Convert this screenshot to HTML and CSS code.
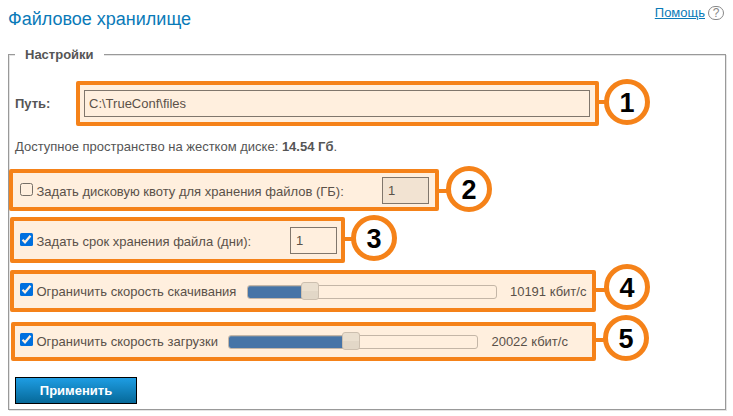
FILE: index.html
```html
<!DOCTYPE html>
<html lang="ru">
<head>
<meta charset="utf-8">
<title>Файловое хранилище</title>
<link rel="stylesheet" href="styles.css">
</head>
<body>
<header class="header">
  <h1 class="title">Файловое хранилище</h1>
  <div class="help"><a class="help-link" href="#">Помощь</a>
    <span class="help-icon">?</span>
  </div>
</header>
<fieldset class="settings">
  <legend class="legend">Настройки</legend>

  <div class="path-row">
    <label class="path-label" for="path">Путь:</label>
    <div class="mark mark-path">
      <input class="field field-path" id="path" type="text" value="C:\TrueConf\files">
      <span class="badge">1</span>
    </div>
  </div>

  <p class="space">Доступное пространство на жестком диске: <b>14.54 Гб</b>.</p>

  <div class="mark mark-quota">
    <svg class="check" width="13" height="13" viewBox="0 0 13 13"><rect x=".5" y=".5" width="12" height="12" rx="2" fill="none" stroke="#756e66"/></svg>
    <span class="label">Задать дисковую квоту для хранения файлов (ГБ):</span>
    <input class="field field-small field-disabled" type="text" value="1" disabled>
    <span class="badge">2</span>
  </div>

  <div class="mark mark-days">
    <svg class="check" width="13" height="13" viewBox="0 0 13 13"><rect width="13" height="13" rx="1.5" fill="#0070df"/><path d="M2.5 6.8 5 9.3 10.5 2.8" fill="none" stroke="#fff0df" stroke-width="2.2"/></svg>
    <span class="label">Задать срок хранения файла (дни):</span>
    <input class="field field-small" type="text" value="1">
    <span class="badge">3</span>
  </div>

  <div class="mark mark-download">
    <svg class="check" width="13" height="13" viewBox="0 0 13 13"><rect width="13" height="13" rx="1.5" fill="#0070df"/><path d="M2.5 6.8 5 9.3 10.5 2.8" fill="none" stroke="#fff0df" stroke-width="2.2"/></svg>
    <span class="label">Ограничить скорость скачивания</span>
    <div class="slider"><div class="slider-fill" style="width: 62px"></div><div class="slider-handle" style="left: 53px"></div></div>
    <span class="value">10191 кбит/с</span>
    <span class="badge">4</span>
  </div>

  <div class="mark mark-upload">
    <svg class="check" width="13" height="13" viewBox="0 0 13 13"><rect width="13" height="13" rx="1.5" fill="#0070df"/><path d="M2.5 6.8 5 9.3 10.5 2.8" fill="none" stroke="#fff0df" stroke-width="2.2"/></svg>
    <span class="label">Ограничить скорость загрузки</span>
    <div class="slider"><div class="slider-fill" style="width: 122px"></div><div class="slider-handle" style="left: 113px"></div></div>
    <span class="value">20022 кбит/с</span>
    <span class="badge">5</span>
  </div>

  <button class="apply" type="button">Применить</button>
</fieldset>
</body>
</html>
```

FILE: styles.css
```css
* { box-sizing: border-box; }

body {
  margin: 0;
  width: 733px;
  height: 416px;
  overflow: hidden;
  background: #fff;
  color: #555;
  font: 13px/15px "Liberation Sans", Arial, sans-serif;
}

.header {
  display: flex;
  justify-content: space-between;
  height: 47px;
  padding: 0 9px 0 8px;
}

.title {
  margin: 9px 0 0;
  color: #0a7ab8;
  font-size: 18px;
  font-weight: 400;
  line-height: 20px;
}

.help {
  display: flex;
  align-items: flex-start;
  gap: 3px;
  margin-top: 5px;
}

.help-link { color: #0a7ab8; }

.help-icon {
  width: 16px;
  height: 14px;
  margin-top: 1px;
  border: 1px solid #888;
  border-radius: 7px;
  color: #888;
  font-size: 12px;
  line-height: 13px;
  text-align: center;
}

.settings {
  width: 718px;
  height: 363px;
  min-width: 0;
  margin: 0 0 0 8px;
  padding: 0;
  border: 1px solid #999;
  box-shadow: 1px 1px 0 #e4e4e4, inset 1px 1px 0 #e4e4e4;
}

.legend {
  margin-left: 6px;
  padding: 0 10px;
  background: #fff;
  font-weight: 700;
}

.path-row {
  display: flex;
  margin: 19px 0 0 6px;
}

.path-label {
  width: 61px;
  padding-top: 15px;
  font-weight: 700;
}

.space { margin: 13px 0 0 6px; }

.mark {
  position: relative;
  display: flex;
  align-items: flex-start;
  border: 4px solid #f58219;
  border-radius: 2px;
  background: #ffefde;
  color: #5a5149;
}

.mark-path {
  --badge-left: 524px;
  --badge-top: -6px;
  --line-top: 15px;
  width: 523px;
  height: 45px;
  padding: 5px 4px;
}

.mark-quota {
  --badge-left: 433px;
  --badge-top: -7px;
  --line-top: 16px;
  width: 430px;
  height: 42px;
  margin-top: 15px;
  padding: 4px 6px 0 7px;
}

.mark-days {
  --badge-left: 337px;
  --badge-top: -6px;
  --line-top: 16px;
  width: 335px;
  height: 46px;
  margin: 6px 0 0 1px;
  padding: 6px 4px 0 6px;
}

.mark-download {
  --badge-left: 590px;
  --badge-top: -10px;
  --line-top: 14px;
  width: 586px;
  height: 42px;
  margin: 7px 0 0 1px;
  padding: 3px 0 0 6px;
}

.mark-upload {
  --badge-left: 588px;
  --badge-top: -11px;
  --line-top: 12px;
  width: 585px;
  height: 39px;
  margin: 10px 0 0 2px;
  padding: 1px 0 0 5px;
}

.check {
  flex: none;
  margin: 6px 3.5px 0 0;
}

.label {
  padding-top: 7px;
  white-space: nowrap;
}

.field {
  height: 27px;
  margin: 0;
  padding: 0 4px;
  border: 1px solid #80766c;
  border-radius: 0;
  background: transparent;
  color: #5a5149;
  font: inherit;
}

.field-path { width: 506px; }

.field-small {
  width: 47px;
  margin-left: auto;
  padding: 0 5px;
}

.field-disabled { background: #f2e3d2; }

.slider {
  position: relative;
  flex: none;
  width: 250px;
  height: 14px;
  margin: 8px 13px 0 10.5px;
  border: 1px solid #c4b6a7;
  border-radius: 3px;
}

.slider-fill {
  height: 12px;
  border-top: 1px solid #6a87a5;
  border-radius: 2px;
  background: #4674a7;
}

.slider-handle {
  position: absolute;
  top: -4px;
  width: 18px;
  height: 18px;
  border: 1px solid #ccbfaf;
  border-radius: 3px;
  background: linear-gradient(#eadfcf 50%, #e2d7c7 50%);
}

.value {
  padding-top: 7px;
  white-space: nowrap;
}

.badge {
  position: absolute;
  top: var(--badge-top);
  left: var(--badge-left);
  width: 46px;
  height: 46px;
  border: 5px solid #f58219;
  border-radius: 50%;
  background: #fff;
  color: #000;
  font-size: 27px;
  font-weight: 700;
  line-height: 38px;
  text-align: center;
}

/* Connector between the frame and its number */
.mark::after {
  content: "";
  position: absolute;
  top: var(--line-top);
  left: 100%;
  width: 13px;
  height: 4px;
  background: #f58219;
}

.apply {
  display: block;
  width: 122px;
  height: 27px;
  margin: 16px 0 0 6px;
  padding: 0;
  border: 1px solid #000;
  background: linear-gradient(#1e9de3, #066999);
  color: #fff;
  font: 700 13px/25px "Liberation Sans", Arial, sans-serif;
}
```
